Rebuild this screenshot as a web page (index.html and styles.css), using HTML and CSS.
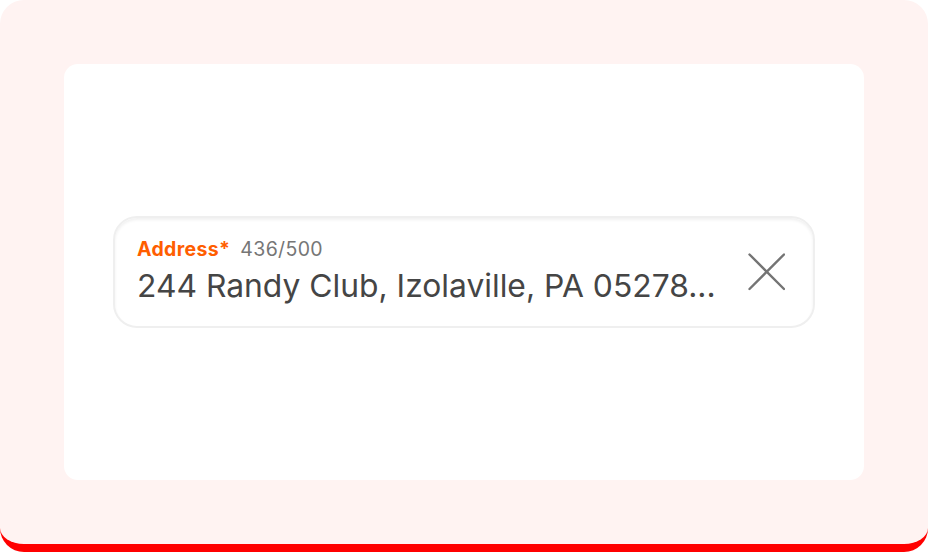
FILE: index.html
```html
<!DOCTYPE html>
<html>
<head>
<meta charset="utf-8">
<link rel="stylesheet" href="styles.css">
</head>
<body>
<div class="frame">
  <div class="card">
    <div class="field">
      <div class="field-body">
        <div class="label-row">
          <span class="label">Address*</span>
          <span class="count">436/500</span>
        </div>
        <div class="value">244 Randy Club, Izolaville, PA 05278...</div>
      </div>
      <button class="clear" aria-label="Clear">
        <svg width="38" height="38" viewBox="0 0 38 38" fill="none" stroke="#747474" stroke-width="2.4" stroke-linecap="round">
          <path d="M2.5 1.5 L37 36 M37 1.5 L2.5 36"/>
        </svg>
      </button>
    </div>
  </div>
</div>
</body>
</html>
```
FILE: styles.css
```css
html, body {
  margin: 0;
  padding: 0;
  background: #ffffff;
}
body {
  font-family: Inter, "Noto Sans", sans-serif;
}
.frame {
  box-sizing: border-box;
  width: 928px;
  height: 552px;
  background: #fff3f2;
  border-radius: 24px;
  border-bottom: 8px solid #ff0000;
  padding: 64px;
}
.card {
  height: 416px;
  background: #ffffff;
  border-radius: 14px;
  display: flex;
  align-items: center;
  justify-content: center;
}
.field {
  box-sizing: border-box;
  width: 702px;
  height: 112px;
  border: 2px solid #efefef;
  border-radius: 24px;
  box-shadow: inset 0 2px 3px rgba(0,0,0,0.06);
  display: flex;
  align-items: center;
  padding: 0 28px 0 22px;
  margin-top: -1px;
}
.field-body {
  flex: 1;
  display: flex;
  flex-direction: column;
  gap: 8px;
  padding-bottom: 1px;
}
.label-row {
  display: flex;
  align-items: baseline;
  gap: 10px;
  margin-top: 2px;
  font-size: 19.5px;
  line-height: 20px;
  letter-spacing: 0.35px;
}
.label {
  color: #ff5e00;
  font-weight: 700;
}
.count {
  color: #767676;
}
.value {
  font-size: 31.8px;
  line-height: 38px;
  color: #454545;
  white-space: nowrap;
}
.clear {
  border: none;
  background: none;
  padding: 0;
  width: 38px;
  height: 38px;
  display: flex;
}
```
